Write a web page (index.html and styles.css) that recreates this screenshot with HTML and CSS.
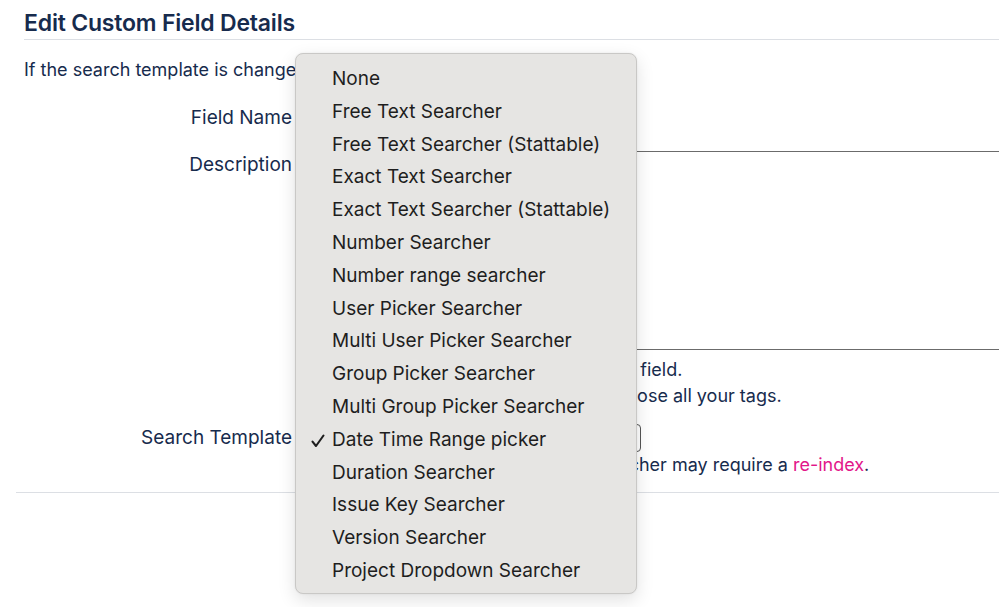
FILE: index.html
```html
<!DOCTYPE html>
<html lang="en">
<head>
<meta charset="utf-8">
<title>Edit Custom Field Details</title>
<link rel="stylesheet" href="styles.css">
</head>
<body>
<div class="page">
  <h1 class="title">Edit Custom Field Details</h1>
  <p class="intro">If the search template is changed, a re-index may be required.</p>
  <form class="form">
    <div class="row row-name">
      <label class="label">Field Name</label>
      <div class="field"><div class="input"></div></div>
    </div>
    <div class="row row-desc">
      <label class="label">Description</label>
      <div class="field">
        <div class="textarea"></div>
        <div class="help help-first">Enter a description here for this custom field.</div>
        <div class="help">Changing the field's wiki renderer may lose all your tags.</div>
      </div>
    </div>
    <div class="row row-select">
      <label class="label">Search Template</label>
      <div class="field">
        <div class="select"></div>
        <div class="help">Note that changing a custom field searcher may require a <a class="link" href="#">re-index</a>.</div>
      </div>
    </div>
  </form>
  <hr class="divider">
</div>

<div class="menu">
  <div class="item">None</div>
  <div class="item">Free Text Searcher</div>
  <div class="item">Free Text Searcher (Stattable)</div>
  <div class="item">Exact Text Searcher</div>
  <div class="item">Exact Text Searcher (Stattable)</div>
  <div class="item">Number Searcher</div>
  <div class="item">Number range searcher</div>
  <div class="item">User Picker Searcher</div>
  <div class="item">Multi User Picker Searcher</div>
  <div class="item">Group Picker Searcher</div>
  <div class="item">Multi Group Picker Searcher</div>
  <div class="item checked"><svg class="check" viewBox="0 0 14 14" width="14" height="14"><path d="M1.5 7.6 L5 12 L12.5 1.5" fill="none" stroke="#1e1e1e" stroke-width="2.1" stroke-linecap="round" stroke-linejoin="round"/></svg>Date Time Range picker</div>
  <div class="item">Duration Searcher</div>
  <div class="item">Issue Key Searcher</div>
  <div class="item">Version Searcher</div>
  <div class="item">Project Dropdown Searcher</div>
</div>
</body>
</html>
```

FILE: styles.css
```css
html, body {
  margin: 0;
  padding: 0;
  background: #ffffff;
  overflow: hidden;
}
body {
  width: 999px;
  height: 607px;
  font-family: "Inter", "Noto Sans", sans-serif;
  color: #172b4d;
  position: relative;
}
.page {
  padding: 0 0 0 16px;
}
.title {
  margin: 0 0 0 8px;
  padding-top: 9px;
  padding-bottom: 1px;
  font-size: 23px;
  line-height: 29px;
  font-weight: 600;
  letter-spacing: -0.2px;
  border-bottom: 1px solid #dcdfe4;
}
.intro {
  margin: 18px 0 0 8px;
  font-size: 18px;
  line-height: 24px;
  white-space: nowrap;
}
.form {
  margin-top: 12px;
}
.row {
  display: grid;
  grid-template-columns: 276px 1fr;
  column-gap: 8px;
}
.label {
  text-align: right;
  font-size: 19px;
  line-height: 24px;
}
.row-name .label {
  padding-top: 12px;
}
.row-name .field {
  padding-top: 12px;
}
.input {
  width: 300px;
  height: 28px;
  border: 1px solid #6b6b6b;
  border-radius: 4px;
}
.row-desc .label {
  padding-top: 17px;
}
.row-desc .field {
  padding-top: 15px;
}
.textarea {
  width: 900px;
  height: 197px;
  border: 1px solid #6b6b6b;
}
.help {
  font-size: 18px;
  line-height: 26px;
  white-space: nowrap;
}
.help-first {
  margin-top: 7px;
}
.row-select .label {
  padding-top: 17px;
}
.row-select .field {
  padding-top: 15px;
}
.select {
  width: 339px;
  height: 26px;
  border: 1px solid #555;
  border-radius: 4px;
}
.link {
  color: #e2168a;
  text-decoration: none;
}
.divider {
  margin: 14px 0 0 0;
  border: 0;
  border-top: 1px solid #dcdfe4;
}
.menu {
  position: absolute;
  left: 295px;
  top: 53px;
  width: 342px;
  height: 541px;
  box-sizing: border-box;
  padding: 9px 0 0 0;
  background: #e6e5e3;
  border: 1px solid #c9c8c6;
  border-radius: 8px;
  box-shadow: 0 6px 18px rgba(0, 0, 0, 0.12), 0 0 2px rgba(0, 0, 0, 0.08);
  color: #1e1e1e;
}
.item {
  position: relative;
  height: 32.8px;
  line-height: 32.8px;
  padding-left: 36px;
  font-size: 19px;
  white-space: nowrap;
}
.check {
  position: absolute;
  left: 15px;
  top: 10px;
}
```
